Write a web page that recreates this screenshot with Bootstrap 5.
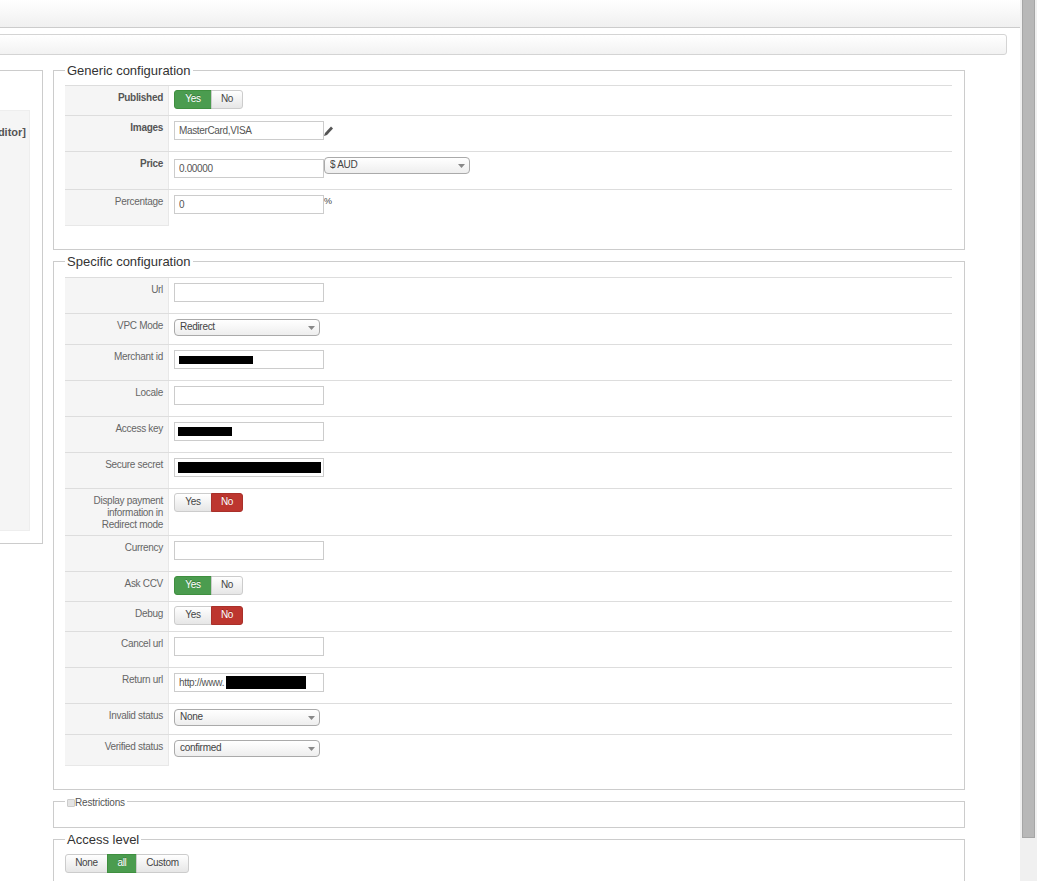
<!DOCTYPE html>
<html lang="en">
<head>
    <meta charset="UTF-8">
    <meta name="viewport" content="width=device-width, initial-scale=1.0">
    <title>Payment method configuration</title>
    <link href="https://cdn.jsdelivr.net/npm/bootstrap@5.3.0/dist/css/bootstrap.min.css" rel="stylesheet">
    <style>
        html, body { height: 881px; overflow: hidden; }
        body { font-family: "Liberation Sans", Arial, sans-serif; font-size: 10px; letter-spacing: -.3px; line-height: 12px; color: #555; background: #fff; }
        .page-area { width: 1020px; height: 881px; overflow: hidden; }
        .top-bar { height: 28px; background: linear-gradient(#fff, #f0f0f0); border-bottom: 1px solid #ccc; }
        .crumb-bar { height: 21px; width: 1012px; margin: 6px 0 5px -5px; background: linear-gradient(#fff, #f2f2f2); border: 1px solid #d4d4d4; border-radius: 3px; }
        .side-col { width: 43px; flex: none; overflow: hidden; }
        .side-box { height: 474px; margin: 10px 0 0 -5px; padding: 39px 12px 12px 0; border: 1px solid #ccc; }
        .side-panel { height: 100%; background: #f5f5f5; border: 1px solid #eee; padding: 15px 3px 0 0; font-size: 11px; letter-spacing: 0; font-weight: 700; white-space: nowrap; direction: rtl; overflow: hidden; }
        .form-col { width: 912px; flex: none; margin-left: 10px; }
        .cfg-box { border: 1px solid #ccc; padding: 0 12px 23px 11px; margin-bottom: 1px; }
        .cfg-box legend { float: none; width: auto; margin: 0; padding: 2px 2px 0; font-size: 13px; letter-spacing: 0; line-height: 18px; color: #333; }
        .cfg-box legend.legend-small { padding: 0 2px; font-size: 10px; letter-spacing: -.2px; line-height: 20px; color: #555; }
        .legend-text { position: relative; top: 2px; }
        .legend-check { appearance: none; width: 8px; height: 8px; margin: 0; vertical-align: -1px; background: #e4e4e4; border: 1px solid #ccc; border-radius: 1px; position: relative; top: 2px; }
        .box-restrict { padding-bottom: 16px; margin-bottom: 1px; }
        .cfg-list { margin-top: 5px; }
        .box-specific .cfg-list { margin-top: 6px; }
        .cfg-row { border-top: 1px solid #ddd; }
        .cfg-label { width: 104px; flex: none; padding: 6px 5px 4px 10px; text-align: right; background: #f5f5f5; border-right: 1px solid #e8e8e8; color: #666; }
        .cfg-label.is-strong { font-weight: 700; color: #555; }
        .cfg-row:last-child .cfg-label { border-bottom: 1px solid #e8e8e8; }
        .cfg-value { padding: 5px 0 11px 5px; }
        .cfg-value.is-toggle { padding: 4px 0 6px 5px; }
        .cfg-value.is-select { padding: 5px 0 8px 5px; }
        .cfg-row:last-child .cfg-value { padding-bottom: 12px; }
        .cfg-row:last-child .cfg-value.is-select { padding-bottom: 9px; }
        .cfg-field { display: block; width: 150px; height: 19px; padding: 0 4px; font-size: 10px; letter-spacing: -.35px; line-height: 17px; color: #555; background: #fff; border: 1px solid #ccc; border-radius: 0; outline: 0; }
        .field-offset { margin-top: 2px; }
        .cfg-select { display: block; width: 146px; height: 17px; padding: 0 16px 2px 5px; font-size: 10px; letter-spacing: -.3px; line-height: 13px; color: #444; border: 1px solid #aaa; border-radius: 4px; outline: 0; appearance: none; background-color: #f4f4f4; background-image: url("data:image/svg+xml,%3Csvg xmlns='http://www.w3.org/2000/svg' width='7' height='4'%3E%3Cpath d='M0 0h7L3.5 4z' fill='%23888'/%3E%3C/svg%3E"), linear-gradient(#fff, #eee); background-repeat: no-repeat; background-position: right 4px center, 0 0; }
        .toggle-group { display: flex; width: max-content; }
        .toggle-group .btn { height: 19px; padding: 0 0 2px; font-size: 10px; letter-spacing: -.3px; line-height: 15px; color: #444; background: linear-gradient(#fff, #e6e6e6); border: 1px solid #ccc; border-radius: 3px; }
        .toggle-group .btn.toggle-yes { background: #4b9c4f; border-color: #3f8f3f; color: #fff; text-shadow: 0 -1px 0 rgba(0, 0, 0, .25); }
        .toggle-group .btn.toggle-no { background: #bd362f; border-color: #a9302a; color: #fff; text-shadow: 0 -1px 0 rgba(0, 0, 0, .25); }
        .btn-w38 { width: 38px; }
        .btn-w32 { width: 32px; }
        .btn-w43 { width: 43px; }
        .btn-w30 { width: 30px; }
        .btn-w53 { width: 53px; }
        .field-mask { display: block; flex: none; background: #000; }
        .mask-merchant { width: 74px; height: 8px; }
        .mask-access { width: 54px; height: 9px; margin-left: -1px; }
        .mask-secret { width: 143px; height: 11px; margin-left: -1px; }
        .mask-return { width: 80px; height: 13px; margin-left: 2px; }
        .edit-icon { width: 10px; height: 10px; margin-top: 5px; }
        .unit-sign { font-size: 9px; color: #444; }
        .access-body { margin: 5px 0 0; }
        .fake-scroll { width: 17px; height: 881px; flex: none; padding: 0 2px; background: #f0f0f0; }
        .fake-thumb { height: 838px; background: #b8b8b8; border: 1px solid #a6a6a6; border-top: 0; }
    </style>
</head>
<body>
    <div class="d-flex">
        <div class="page-area">
            <div class="top-bar"></div>
            <div class="crumb-bar"></div>
            <div class="d-flex">
                <div class="side-col">
                    <div class="side-box">
                        <div class="side-panel">[editor]</div>
                    </div>
                </div>
                <div class="form-col">
                    <fieldset class="cfg-box">
                        <legend>Generic configuration</legend>
                        <div class="cfg-list">
                            <div class="cfg-row d-flex">
                                <div class="cfg-label is-strong">Published</div>
                                <div class="cfg-value is-toggle">
                                    <div class="btn-group toggle-group">
                                        <button type="button" class="btn btn-w38 toggle-yes">Yes</button>
                                        <button type="button" class="btn btn-w32">No</button>
                                    </div>
                                </div>
                            </div>
                            <div class="cfg-row d-flex">
                                <div class="cfg-label is-strong">Images</div>
                                <div class="cfg-value d-flex align-items-start">
                                    <input class="cfg-field" type="text" value="MasterCard,VISA">
                                    <svg class="edit-icon" viewBox="0 0 10 10"><path d="M0 10l1-3 6-6.5 2 2L3 9z" fill="#555"/></svg>
                                </div>
                            </div>
                            <div class="cfg-row d-flex">
                                <div class="cfg-label is-strong">Price</div>
                                <div class="cfg-value d-flex align-items-start">
                                    <input class="cfg-field field-offset" type="text" value="0.00000">
                                    <select class="cfg-select"><option>$ AUD</option></select>
                                </div>
                            </div>
                            <div class="cfg-row d-flex">
                                <div class="cfg-label">Percentage</div>
                                <div class="cfg-value d-flex align-items-start">
                                    <input class="cfg-field" type="text" value="0">
                                    <span class="unit-sign">%</span>
                                </div>
                            </div>
                        </div>
                    </fieldset>

                    <fieldset class="cfg-box box-specific">
                        <legend>Specific configuration</legend>
                        <div class="cfg-list">
                            <div class="cfg-row d-flex">
                                <div class="cfg-label">Url</div>
                                <div class="cfg-value"><input class="cfg-field" type="text"></div>
                            </div>
                            <div class="cfg-row d-flex">
                                <div class="cfg-label">VPC Mode</div>
                                <div class="cfg-value is-select"><select class="cfg-select"><option>Redirect</option></select></div>
                            </div>
                            <div class="cfg-row d-flex">
                                <div class="cfg-label">Merchant id</div>
                                <div class="cfg-value"><div class="cfg-field d-flex align-items-center"><span class="field-mask mask-merchant"></span></div></div>
                            </div>
                            <div class="cfg-row d-flex">
                                <div class="cfg-label">Locale</div>
                                <div class="cfg-value"><input class="cfg-field" type="text"></div>
                            </div>
                            <div class="cfg-row d-flex">
                                <div class="cfg-label">Access key</div>
                                <div class="cfg-value"><div class="cfg-field d-flex align-items-center"><span class="field-mask mask-access"></span></div></div>
                            </div>
                            <div class="cfg-row d-flex">
                                <div class="cfg-label">Secure secret</div>
                                <div class="cfg-value"><div class="cfg-field d-flex align-items-center"><span class="field-mask mask-secret"></span></div></div>
                            </div>
                            <div class="cfg-row d-flex">
                                <div class="cfg-label">Display payment information in Redirect mode</div>
                                <div class="cfg-value is-toggle">
                                    <div class="btn-group toggle-group">
                                        <button type="button" class="btn btn-w38">Yes</button>
                                        <button type="button" class="btn btn-w32 toggle-no">No</button>
                                    </div>
                                </div>
                            </div>
                            <div class="cfg-row d-flex">
                                <div class="cfg-label">Currency</div>
                                <div class="cfg-value"><input class="cfg-field" type="text"></div>
                            </div>
                            <div class="cfg-row d-flex">
                                <div class="cfg-label">Ask CCV</div>
                                <div class="cfg-value is-toggle">
                                    <div class="btn-group toggle-group">
                                        <button type="button" class="btn btn-w38 toggle-yes">Yes</button>
                                        <button type="button" class="btn btn-w32">No</button>
                                    </div>
                                </div>
                            </div>
                            <div class="cfg-row d-flex">
                                <div class="cfg-label">Debug</div>
                                <div class="cfg-value is-toggle">
                                    <div class="btn-group toggle-group">
                                        <button type="button" class="btn btn-w38">Yes</button>
                                        <button type="button" class="btn btn-w32 toggle-no">No</button>
                                    </div>
                                </div>
                            </div>
                            <div class="cfg-row d-flex">
                                <div class="cfg-label">Cancel url</div>
                                <div class="cfg-value"><input class="cfg-field" type="text"></div>
                            </div>
                            <div class="cfg-row d-flex">
                                <div class="cfg-label">Return url</div>
                                <div class="cfg-value"><div class="cfg-field d-flex align-items-center"><span>http://www.</span><span class="field-mask mask-return"></span></div></div>
                            </div>
                            <div class="cfg-row d-flex">
                                <div class="cfg-label">Invalid status</div>
                                <div class="cfg-value is-select"><select class="cfg-select"><option>None</option></select></div>
                            </div>
                            <div class="cfg-row d-flex">
                                <div class="cfg-label">Verified status</div>
                                <div class="cfg-value is-select"><select class="cfg-select"><option>confirmed</option></select></div>
                            </div>
                        </div>
                    </fieldset>

                    <fieldset class="cfg-box box-restrict">
                        <legend class="legend-small"><input class="legend-check" type="checkbox"><span class="legend-text">Restrictions</span></legend>
                    </fieldset>

                    <fieldset class="cfg-box">
                        <legend>Access level</legend>
                        <div class="access-body">
                            <div class="btn-group toggle-group">
                                <button type="button" class="btn btn-w43">None</button>
                                <button type="button" class="btn btn-w30 toggle-yes">all</button>
                                <button type="button" class="btn btn-w53">Custom</button>
                            </div>
                        </div>
                    </fieldset>
                </div>
            </div>
        </div>
        <div class="fake-scroll"><div class="fake-thumb"></div></div>
    </div>
    <script src="https://cdn.jsdelivr.net/npm/bootstrap@5.3.0/dist/js/bootstrap.bundle.min.js"></script>
</body>
</html>
